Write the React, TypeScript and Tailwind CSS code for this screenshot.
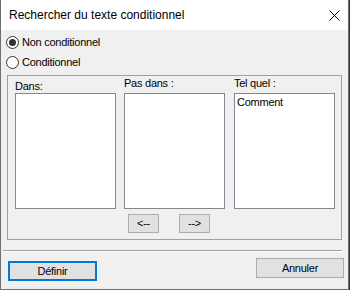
const Radio = ({ checked, label }: { checked?: boolean; label: string }) => (
  <div className="h-[20px] flex items-center pl-[5px]">
    <span className="w-[13px] h-[13px] rounded-full border border-[#333333] bg-white flex items-center justify-center">
      {checked && <span className="w-[7px] h-[7px] rounded-full bg-[#333333]" />}
    </span>
    <span className="ml-[3px] leading-[13px]">{label}</span>
  </div>
);

const Column = ({ label, top, items }: { label: string; top: string; items?: string[] }) => (
  <div className="w-[101px] flex flex-col">
    <div className={`h-[17px] leading-[13px] ${top}`}>{label}</div>
    <div className="h-[116px] border border-[#828790] bg-white px-[2px] pt-[2px] leading-[13px]">
      {items?.map(i => (
        <div key={i}>{i}</div>
      ))}
    </div>
  </div>
);

const App = () => {
  return (
    <div className="w-[350px] h-[290px] bg-[#3b3128] font-['Liberation_Sans',Arial,sans-serif] text-black">
      <div className="w-[349px] h-[290px] bg-[#f0f0f0] border-x border-b border-[#707070] flex flex-col text-[11px] tracking-[-0.25px]">
        <div className="h-[30px] shrink-0 bg-white flex items-center justify-between pl-[8px] pr-[8px] text-[12px] tracking-normal">
          <span>Rechercher du texte conditionnel</span>
          <svg width="11" height="11" viewBox="0 0 11 11" className="mt-[1px]">
            <path d="M0.5 0.5 L10.5 10.5 M10.5 0.5 L0.5 10.5" stroke="#000" strokeWidth="1" />
          </svg>
        </div>

        <div className="pt-[2px]">
          <Radio checked label="Non conditionnel" />
          <Radio label="Conditionnel" />
        </div>

        <div className="mt-[3px] mx-[6px] h-[165px] border border-[#a0a0a0] pl-[7px]">
          <div className="flex">
            <Column label="Dans:" top="pt-[4px]" />
            <div className="w-[8px]" />
            <Column label="Pas dans :" top="pt-[1px]" />
            <div className="w-[9px]" />
            <Column label="Tel quel :" top="pt-[1px]" items={['Comment']} />
          </div>
          <div className="mt-[5px] flex gap-[20px] pl-[113px]">
            <button className="w-[31px] h-[19px] bg-[#e1e1e1] border border-[#adadad] leading-[13px]">
              &lt;--
            </button>
            <button className="w-[31px] h-[19px] bg-[#e1e1e1] border border-[#adadad] leading-[13px]">
              --&gt;
            </button>
          </div>
        </div>

        <div className="mt-[10px] ml-[2px] mr-[6px] h-[2px] border-t border-[#a0a0a0] border-b border-b-white" />

        <div className="flex justify-between items-start pl-[7px] pr-[4px]">
          <button className="mt-[9px] w-[89px] h-[20px] bg-[#e1e1e1] border-2 border-[#0078d7] leading-[13px]">
            Définir
          </button>
          <button className="mt-[6px] w-[88px] h-[20px] bg-[#e1e1e1] border border-[#adadad] leading-[13px]">
            Annuler
          </button>
        </div>
      </div>
    </div>
  );
};

export default App;
